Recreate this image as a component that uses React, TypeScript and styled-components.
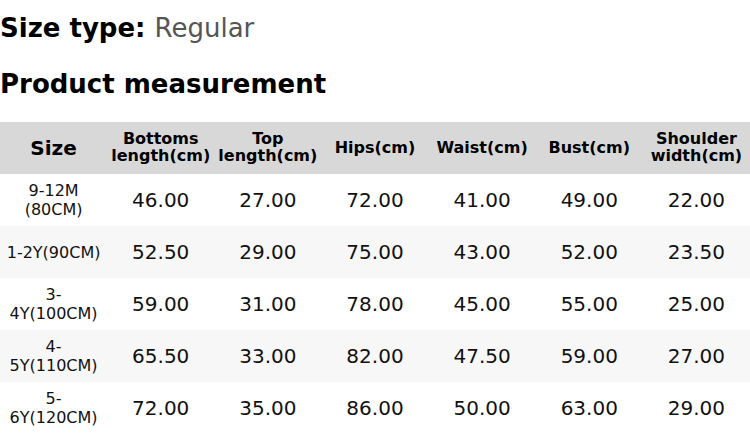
import React from "react";
import styled, { createGlobalStyle } from "styled-components";

const GlobalStyle = createGlobalStyle`
  html, body {
    margin: 0;
    padding: 0;
    background: #ffffff;
  }
  body {
    font-family: "DejaVu Sans", "Liberation Sans", sans-serif;
    color: #000;
  }
`;

const Page = styled.div`
  width: 750px;
  display: flex;
  flex-direction: column;
`;

const SizeType = styled.div`
  margin: 13px 0 0;
  font-size: 26px;
  line-height: normal;
  font-weight: 700;
  color: #000;
`;

const SizeValue = styled.span`
  font-weight: 400;
  color: #555555;
`;

const SectionTitle = styled.h2`
  margin: 26px 0 0;
  font-size: 26px;
  line-height: normal;
  font-weight: 700;
  color: #000;
`;

const Table = styled.table`
  margin-top: 23px;
  width: 750px;
  table-layout: fixed;
  border-collapse: collapse;
  border-spacing: 0;
`;

const HeadCell = styled.th<{ $large?: boolean }>`
  height: 52px;
  padding: 0 4px;
  background: #d8d8d8;
  font-size: ${(p) => (p.$large ? "20px" : "16px")};
  line-height: 1.05;
  font-weight: 700;
  text-align: center;
  vertical-align: middle;
  color: #000;
`;

const Row = styled.tr<{ $alt: boolean }>`
  background: ${(p) => (p.$alt ? "#f7f7f7" : "#ffffff")};
`;

const SizeCell = styled.td`
  height: 52px;
  padding: 0 4px;
  font-size: 16px;
  line-height: normal;
  text-align: center;
  vertical-align: middle;
  color: #111;
`;

const ValueCell = styled.td`
  height: 52px;
  padding: 0 4px;
  font-size: 20px;
  line-height: normal;
  text-align: center;
  vertical-align: middle;
  color: #111;
`;

const headers: { label: React.ReactNode; large?: boolean }[] = [
  { label: "Size", large: true },
  { label: "Bottoms length(cm)" },
  { label: "Top length(cm)" },
  { label: "Hips(cm)" },
  { label: "Waist(cm)" },
  { label: "Bust(cm)" },
  { label: "Shoulder width(cm)" },
];

const rows: string[][] = [
  ["9-12M (80CM)", "46.00", "27.00", "72.00", "41.00", "49.00", "22.00"],
  ["1-2Y(90CM)", "52.50", "29.00", "75.00", "43.00", "52.00", "23.50"],
  ["3-4Y(100CM)", "59.00", "31.00", "78.00", "45.00", "55.00", "25.00"],
  ["4-5Y(110CM)", "65.50", "33.00", "82.00", "47.50", "59.00", "27.00"],
  ["5-6Y(120CM)", "72.00", "35.00", "86.00", "50.00", "63.00", "29.00"],
];

export default function App() {
  return (
    <Page>
      <GlobalStyle />
      <SizeType>
        Size type: <SizeValue>Regular</SizeValue>
      </SizeType>
      <SectionTitle>Product measurement</SectionTitle>
      <Table>
        <thead>
          <tr>
            {headers.map((h, i) => (
              <HeadCell key={i} $large={h.large}>
                {h.label}
              </HeadCell>
            ))}
          </tr>
        </thead>
        <tbody>
          {rows.map((r, i) => (
            <Row key={i} $alt={i % 2 === 1}>
              <SizeCell>{r[0]}</SizeCell>
              {r.slice(1).map((v, j) => (
                <ValueCell key={j}>{v}</ValueCell>
              ))}
            </Row>
          ))}
        </tbody>
      </Table>
    </Page>
  );
}
